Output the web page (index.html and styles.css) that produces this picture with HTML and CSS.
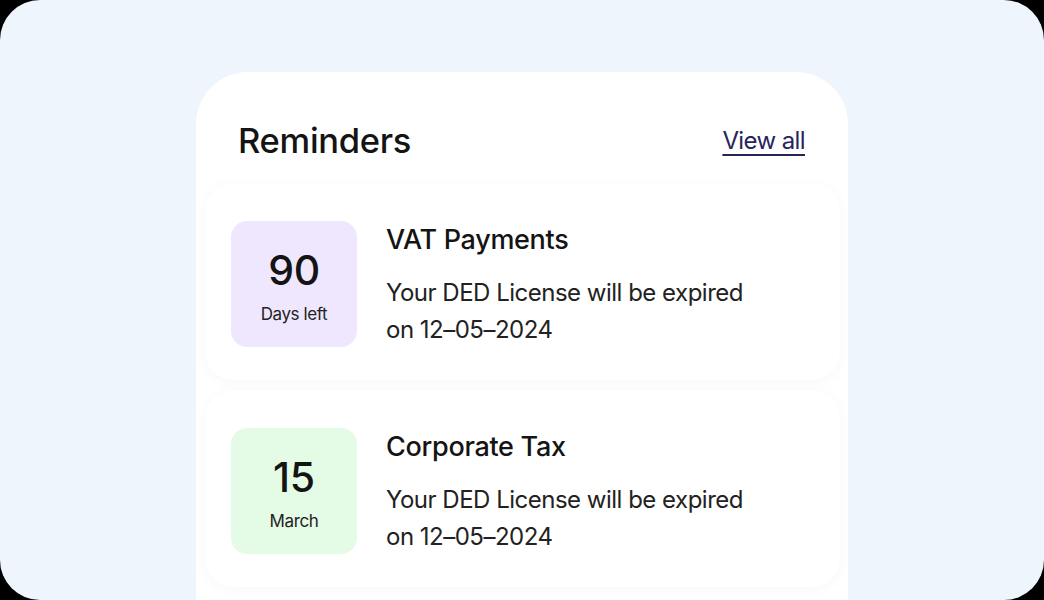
FILE: index.html
```html
<!DOCTYPE html>
<html>
<head>
<meta charset="utf-8">
<link rel="stylesheet" href="styles.css">
</head>
<body>
<div class="panel">
  <div class="card">
    <div class="header">
      <h1 class="title">Reminders</h1>
      <a class="view-all" href="#">View all</a>
    </div>
    <div class="item">
      <div class="badge badge-purple">
        <div class="badge-num">90</div>
        <div class="badge-label">Days left</div>
      </div>
      <div class="info">
        <div class="info-title">VAT Payments</div>
        <div class="info-desc">Your DED License will be expired<br>on 12–05–2024</div>
      </div>
    </div>
    <div class="item">
      <div class="badge badge-green">
        <div class="badge-num">15</div>
        <div class="badge-label">March</div>
      </div>
      <div class="info">
        <div class="info-title">Corporate Tax</div>
        <div class="info-desc">Your DED License will be expired<br>on 12–05–2024</div>
      </div>
    </div>
  </div>
</div>
</body>
</html>
```
FILE: styles.css
```css
html, body {
  margin: 0;
  padding: 0;
  background: #000;
}
body {
  width: 1044px;
  height: 600px;
  overflow: hidden;
  font-family: "Inter", "Noto Sans", sans-serif;
  color: #141414;
}
.panel {
  width: 1044px;
  height: 600px;
  border-radius: 40px;
  background: #eef5fd;
  overflow: hidden;
  padding-top: 72px;
  box-sizing: border-box;
}
.card {
  margin-left: 196px;
  width: 652px;
  height: 600px;
  background: #fff;
  border-radius: 52px 52px 0 0;
  box-sizing: border-box;
  padding: 0 8px 0 9px;
  display: flex;
  flex-direction: column;
  gap: 10px;
}
.header {
  display: flex;
  justify-content: space-between;
  align-items: center;
  padding: 37px 35px 0 33px;
  height: 64px;
}
.title {
  margin: 0;
  font-size: 34.5px;
  font-weight: 500;
  letter-spacing: -0.3px;
  line-height: 48px;
}
.view-all {
  font-size: 24px;
  line-height: 48px;
  color: #27245c;
  text-decoration: underline;
  text-underline-offset: 5px;
  text-decoration-thickness: 1.5px;
  letter-spacing: -0.6px;
}
.item {
  display: flex;
  align-items: flex-start;
  gap: 29px;
  padding: 38px 26px 32px 26px;
  border-radius: 28px;
  background: #fff;
  box-shadow: 0 2px 14px rgba(30, 40, 80, 0.035);
}
.badge {
  width: 126px;
  height: 126px;
  box-sizing: border-box;
  padding-top: 26px;
  border-radius: 16px;
  display: flex;
  flex-direction: column;
  align-items: center;
  flex-shrink: 0;
}
.badge-purple { background: #efe7fd; }
.badge-green { background: #e4fbe5; }
.badge-num {
  font-size: 41px;
  font-weight: 500;
  letter-spacing: -0.3px;
  line-height: 46px;
}
.badge-label {
  font-size: 17px;
  letter-spacing: -0.4px;
  line-height: 22px;
  margin-top: 10px;
  color: #222;
}
.info {
  padding-top: 2px;
}
.info-title {
  font-size: 27px;
  font-weight: 500;
  letter-spacing: -0.3px;
  line-height: 34px;
}
.info-desc {
  margin-top: 17px;
  font-size: 24px;
  letter-spacing: -0.5px;
  line-height: 37px;
  color: #222;
}
```
